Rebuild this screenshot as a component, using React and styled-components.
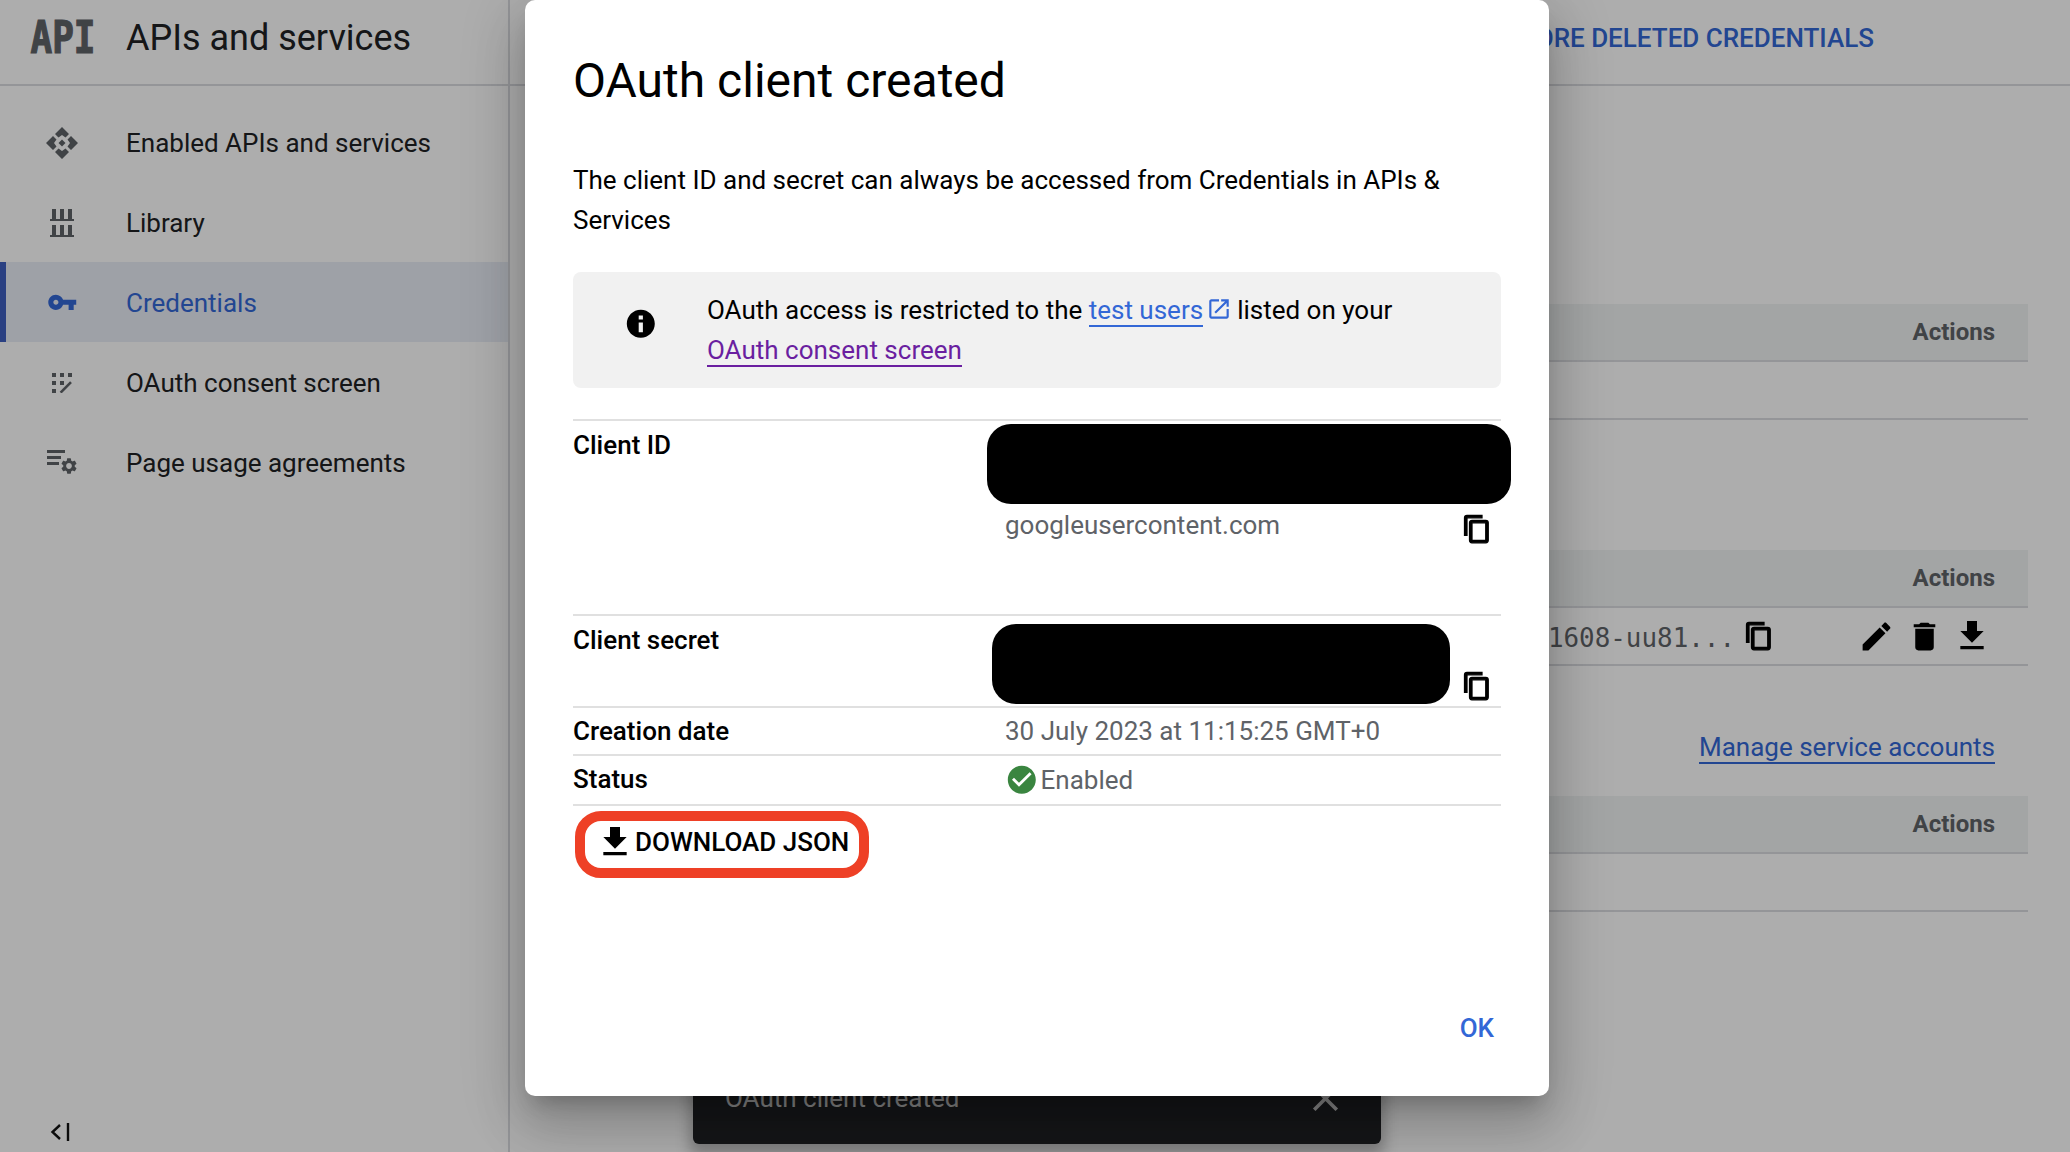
import React from "react";
import styled, { createGlobalStyle } from "styled-components";

const Global = createGlobalStyle`
  html, body { margin: 0; padding: 0; background: #fff; }
  body { font-family: Roboto, "Liberation Sans", sans-serif; color: #202124; }
  * { box-sizing: border-box; }
`;

const P = {
  copy: "M16 1H4c-1.1 0-2 .9-2 2v14h2V3h12V1zm3 4H8c-1.1 0-2 .9-2 2v14c0 1.1.9 2 2 2h11c1.1 0 2-.9 2-2V7c0-1.1-.9-2-2-2zm0 16H8V7h11v14z",
  edit: "M3 17.25V21h3.75L17.81 9.94l-3.75-3.75L3 17.25zM20.71 7.04c.39-.39.39-1.02 0-1.41l-2.34-2.34c-.39-.39-1.02-.39-1.41 0l-1.83 1.83 3.75 3.75 1.83-1.83z",
  del: "M6 19c0 1.1.9 2 2 2h8c1.1 0 2-.9 2-2V7H6v12zM19 4h-3.5l-1-1h-5l-1 1H5v2h14V4z",
  down: "M19 9h-4V3H9v6H5l7 7 7-7zM5 18v2h14v-2H5z",
  key: "M12.65 10C11.83 7.67 9.61 6 7 6c-3.31 0-6 2.69-6 6s2.69 6 6 6c2.61 0 4.83-1.67 5.65-4H17v4h4v-4h2v-4H12.65zM7 14c-1.1 0-2-.9-2-2s.9-2 2-2 2 .9 2 2-.9 2-2 2z",
  info: "M12 2C6.48 2 2 6.48 2 12s4.48 10 10 10 10-4.48 10-10S17.52 2 12 2zm1.5 16h-3v-7h3v7zm0-9h-3V6h3v3z",
  check: "M12 2C6.48 2 2 6.48 2 12s4.48 10 10 10 10-4.48 10-10S17.52 2 12 2zm-2 15l-5-5 1.41-1.41L10 14.17l7.59-7.59L19 8l-9 9z",
  open: "M19 19H5V5h7V3H5c-1.11 0-2 .9-2 2v14c0 1.1.89 2 2 2h14c1.1 0 2-.9 2-2v-7h-2v7zM14 3v2h3.59l-9.83 9.83 1.41 1.41L19 6.41V10h2V3h-7z",
  close: "M19 6.41L17.59 5 12 10.59 6.41 5 5 6.41 10.59 12 5 17.59 6.41 19 12 13.41 17.59 19 19 17.59 13.41 12z",
  gear: "M19.14 12.94c.04-.3.06-.61.06-.94 0-.32-.02-.64-.07-.94l2.03-1.58a.49.49 0 0 0 .12-.61l-1.92-3.32a.488.488 0 0 0-.59-.22l-2.39.96c-.5-.38-1.03-.7-1.62-.94l-.36-2.54a.484.484 0 0 0-.48-.41h-3.84c-.24 0-.43.17-.47.41l-.36 2.54c-.59.24-1.13.57-1.62.94l-2.39-.96c-.22-.08-.47 0-.59.22L2.74 8.87c-.12.21-.08.47.12.61l2.03 1.58c-.05.3-.09.63-.09.94s.02.64.07.94l-2.03 1.58a.49.49 0 0 0-.12.61l1.92 3.32c.12.22.37.29.59.22l2.39-.96c.5.38 1.03.7 1.62.94l.36 2.54c.05.24.24.41.48.41h3.84c.24 0 .44-.17.47-.41l.36-2.54c.59-.24 1.13-.56 1.62-.94l2.39.96c.22.08.47 0 .59-.22l1.92-3.32c.12-.22.07-.47-.12-.61l-2.01-1.58zM12 15.6c-1.98 0-3.6-1.62-3.6-3.6s1.62-3.6 3.6-3.6 3.6 1.62 3.6 3.6-1.62 3.6-3.6 3.6z",
};

const Glyph = ({ d, size = 24, color = "currentColor", weight = 0 }) => (
  <svg width={size} height={size} viewBox="0 0 24 24" fill={color} stroke={weight ? color : "none"} strokeWidth={weight} aria-hidden="true">
    <path d={d} />
  </svg>
);

const ApisIcon = () => (
  <svg width="32" height="32" viewBox="0 0 32 32" fill="#5f6368">
    {[0, 90, 180, 270].map((r) => (
      <polygon key={r} points="16,0 23,7 19.5,10.5 16,8 12.5,10.5 9,7" transform={`rotate(${r} 16 16)`} />
    ))}
    <polygon points="16,12.5 19.5,16 16,19.5 12.5,16" />
  </svg>
);

const LibraryIcon = () => (
  <svg width="24" height="28" viewBox="0 0 24 28" fill="#5f6368">
    {[2, 10, 18].map((x) => (
      <React.Fragment key={x}>
        <rect x={x} y="0" width="4" height="10" />
        <rect x={x} y="16" width="4" height="10" />
      </React.Fragment>
    ))}
    <rect x="0" y="10" width="24" height="2" />
    <rect x="0" y="26" width="24" height="2" />
  </svg>
);

const ConsentIcon = () => (
  <svg width="20" height="20" viewBox="0 0 20 20" fill="#5f6368">
    {[[0, 0], [8, 0], [16, 0], [0, 8], [8, 8], [0, 16]].map(([x, y]) => (
      <rect key={`${x}-${y}`} x={x} y={y} width="4" height="4" />
    ))}
    <path d="M8.6 19.6 19 9.2" stroke="#5f6368" strokeWidth="2.6" fill="none" />
  </svg>
);

const UsageIcon = () => (
  <svg width="30" height="25" viewBox="0 0 30 25" fill="#5f6368">
    <rect x="0" y="0" width="18" height="3" />
    <rect x="0" y="6" width="14" height="3" />
    <rect x="0" y="12" width="12" height="3" />
    <svg x="14" y="7" width="16" height="18" viewBox="2 2 20 20"><path d={P.gear} /></svg>
  </svg>
);

const CollapseIcon = () => (
  <svg width="20" height="18" viewBox="0 0 20 18" fill="none" stroke="#111" strokeWidth="2.4">
    <path d="M10 2 2.5 9 10 16" />
    <path d="M18 0v18" />
  </svg>
);

const Page = styled.div`
  position: relative;
  width: 2070px;
  height: 1152px;
  overflow: hidden;
  display: flex;
  background: #fff;
  font-size: 26px;
  line-height: 40px;
`;

const Sidebar = styled.aside`
  width: 510px;
  flex: none;
  display: flex;
  flex-direction: column;
  border-right: 2px solid #dadce0;
`;

const SideHeader = styled.header`
  height: 86px;
  padding-bottom: 9px;
  display: flex;
  align-items: center;
  gap: 2px;
  border-bottom: 2px solid #dadce0;
  margin-right: -2px;
`;

const IconSlot = styled.span`
  width: 124px;
  flex: none;
  display: flex;
  align-items: center;
  justify-content: center;
`;

const ApiLogo = styled.span`
  display: inline-block;
  font-family: "DejaVu Sans Mono", monospace;
  font-weight: 700;
  font-size: 36px;
  line-height: 36px;
  color: #5f6368;
  -webkit-text-stroke: 1px #5f6368;
  transform: scaleY(1.24);
  margin-left: 2px;
`;

const SideTitle = styled.h1`
  margin: 0;
  font-size: 36px;
  font-weight: 400;
  line-height: 48px;
  color: #202124;
`;

const Nav = styled.nav`
  margin-top: 16px;
`;

const NavItem = styled.a`
  height: 80px;
  padding-top: 1px;
  display: flex;
  align-items: center;
  gap: 2px;
  color: ${(p) => (p.$active ? "#3367d6" : "#202124")};
  background: ${(p) => (p.$active ? "#e9edf7" : "transparent")};
  box-shadow: ${(p) => (p.$active ? "inset 6px 0 0 #3f5fc0" : "none")};
`;

const Collapse = styled.div`
  margin-top: auto;
  padding: 0 0 11px 50px;
  display: flex;
`;

const Main = styled.main`
  flex: 1;
  min-width: 0;
  display: flex;
  flex-direction: column;
  padding: 0 42px;
`;

const TopBar = styled.div`
  height: 86px;
  margin: 0 -42px;
  padding: 0 196px 9px 0;
  display: flex;
  justify-content: flex-end;
  align-items: center;
  border-bottom: 2px solid #dadce0;
  color: #3367d6;
  font-weight: 500;
`;

const Section = styled.section`
  margin-top: ${(p) => p.$top}px;
`;

const TableHead = styled.div`
  height: 58px;
  display: flex;
  justify-content: flex-end;
  align-items: center;
  padding-right: 33px;
  background: #f1f3f4;
  border-bottom: 2px solid #dadce0;
  color: #5f6368;
  font-size: 24px;
  font-weight: 700;
`;

const TableRow = styled.div`
  height: 58px;
  display: flex;
  justify-content: flex-end;
  align-items: center;
  padding-right: 32px;
  border-bottom: 2px solid #dadce0;
`;

const Mono = styled.span`
  font-family: "DejaVu Sans Mono", monospace;
  font-size: 25.9px;
  color: #5f6368;
  white-space: nowrap;
  margin: 3px 9px 0 0;
`;

const CopyButton = styled.span`
  display: flex;
  color: #000;
  margin-right: ${(p) => p.$gap || 0}px;
`;

const ActionIcon = styled.span`
  width: 48px;
  display: flex;
  justify-content: center;
  color: #000;
`;

const LinkRow = styled.div`
  height: 130px;
  padding: 65px 33px 0 0;
  text-align: right;
  line-height: 32px;
`;

const ManageLink = styled.a`
  color: #3367d6;
  border-bottom: 2px solid #3367d6;
`;

const Snackbar = styled.div`
  position: absolute;
  left: 693px;
  top: 1052px;
  width: 688px;
  height: 92px;
  padding: 0 32px;
  display: flex;
  align-items: center;
  justify-content: space-between;
  background: #202124;
  border-radius: 6px;
  color: rgba(255, 255, 255, 0.75);
  box-shadow: 0 8px 14px 4px rgba(0, 0, 0, 0.25);
`;

const SnackClose = styled.span`
  display: flex;
  margin-right: 2px;
`;

const Scrim = styled.div`
  position: absolute;
  inset: 0;
  background: rgba(0, 0, 0, 0.32);
`;

const Dialog = styled.div`
  position: absolute;
  left: 525px;
  top: 0;
  width: 1024px;
  height: 1096px;
  padding: 49px 48px 0;
  display: flex;
  flex-direction: column;
  background: #fff;
  border-radius: 10px;
  box-shadow: 0 15px 20px -9px rgba(0, 0, 0, 0.2), 0 32px 50px 4px rgba(0, 0, 0, 0.14), 0 12px 61px 11px rgba(0, 0, 0, 0.12);
  color: #000;
`;

const DialogTitle = styled.h2`
  margin: 0 0 47px;
  font-size: 48px;
  line-height: 64px;
  font-weight: 400;
`;

const Para = styled.p`
  margin: 0 0 32px;
`;

const Notice = styled.div`
  height: 116px;
  padding: 18px 0;
  display: flex;
  background: #f1f1f1;
  border-radius: 8px;
  margin-bottom: 31px;
`;

const NoticeIcon = styled.span`
  width: 134px;
  flex: none;
  padding: 17px 0 0 2px;
  display: flex;
  justify-content: center;
  align-items: flex-start;
  color: #000;
`;

const NoticeText = styled.div`
  width: 740px;
`;

const TestLink = styled.a`
  color: ${(p) => (p.$visited ? "#6a1fa0" : "#3367d6")};
  border-bottom: 2px solid ${(p) => (p.$visited ? "#6a1fa0" : "#3367d6")};
`;

const ExternalMark = styled.span`
  display: inline-flex;
  vertical-align: -3px;
  margin: 0 5px 0 3px;
  color: #3367d6;
`;

const Row = styled.div`
  display: grid;
  grid-template-columns: 432px 1fr;
  height: ${(p) => p.$h}px;
  border-top: 2px solid #e0e0e0;
  margin-top: ${(p) => p.$mt || 0}px;
  ${(p) => p.$last && "border-bottom: 2px solid #e0e0e0; box-sizing: content-box;"}
`;

const Label = styled.div`
  font-weight: 500;
  padding-top: ${(p) => p.$pt || 0}px;
  line-height: ${(p) => p.$lh || 40}px;
`;

const Value = styled.div`
  color: #5f6368;
  line-height: ${(p) => p.$lh || 40}px;
  display: flex;
  align-items: center;
  gap: 2px;
`;

const IdCell = styled.div`
  display: flex;
  flex-direction: column;
`;

const Redacted = styled.div`
  height: 80px;
  flex: none;
  background: #000;
  border-radius: 24px;
  margin: ${(p) => p.$margin};
  width: ${(p) => p.$w}px;
`;

const IdLine = styled.div`
  display: flex;
  justify-content: space-between;
  align-items: center;
  color: #5f6368;
  height: 42px;
`;

const SecretCell = styled.div`
  display: flex;
  align-items: flex-end;
  height: 88px;
`;

const CellCopy = styled.span`
  display: flex;
  color: #000;
  margin: ${(p) => p.$margin};
`;

const DownloadButton = styled.button`
  align-self: flex-start;
  width: 294px;
  height: 67px;
  margin: 5px 0 0 2px;
  padding: 0 0 6px 10px;
  display: flex;
  align-items: center;
  gap: 0;
  background: #fff;
  border: 10px solid #ee4026;
  border-radius: 26px;
  font: 500 26px/40px Roboto, sans-serif;
  color: #000;
  white-space: nowrap;
`;

const Footer = styled.div`
  margin-top: auto;
  height: 88px;
  padding-right: 7px;
  display: flex;
  justify-content: flex-end;
  align-items: flex-start;
`;

const OkButton = styled.span`
  color: #3367d6;
  font-weight: 500;
`;

const Copy = () => <Glyph d={P.copy} size={30} weight={1} />;

const navItems = [
  { label: "Enabled APIs and services", icon: <ApisIcon /> },
  { label: "Library", icon: <LibraryIcon /> },
  { label: "Credentials", icon: <Glyph d={P.key} size={30.5} color="#3367d6" />, active: true },
  { label: "OAuth consent screen", icon: <ConsentIcon /> },
  { label: "Page usage agreements", icon: <UsageIcon /> },
];

export default function App() {
  return (
    <>
      <Global />
      <Page>
        <Sidebar>
          <SideHeader>
            <IconSlot><ApiLogo>API</ApiLogo></IconSlot>
            <SideTitle>APIs and services</SideTitle>
          </SideHeader>
          <Nav>
            {navItems.map((n) => (
              <NavItem key={n.label} $active={n.active}>
                <IconSlot>{n.icon}</IconSlot>
                {n.label}
              </NavItem>
            ))}
          </Nav>
          <Collapse><CollapseIcon /></Collapse>
        </Sidebar>

        <Main>
          <TopBar>RESTORE DELETED CREDENTIALS</TopBar>
          <Section $top={218}>
            <TableHead>Actions</TableHead>
            <TableRow />
          </Section>
          <Section $top={130}>
            <TableHead>Actions</TableHead>
            <TableRow>
              <Mono>1608-uu81...</Mono>
              <CopyButton $gap={78}><Copy /></CopyButton>
              <ActionIcon><Glyph d={P.edit} size={37} /></ActionIcon>
              <ActionIcon><Glyph d={P.del} size={37} /></ActionIcon>
              <ActionIcon><Glyph d={P.down} size={40} /></ActionIcon>
            </TableRow>
            <LinkRow><ManageLink>Manage service accounts</ManageLink></LinkRow>
          </Section>
          <Section $top={0}>
            <TableHead>Actions</TableHead>
            <TableRow />
          </Section>
        </Main>

        <Snackbar>
          OAuth client created
          <SnackClose><Glyph d={P.close} size={43} /></SnackClose>
        </Snackbar>

        <Scrim />

        <Dialog role="dialog">
          <DialogTitle>OAuth client created</DialogTitle>
          <Para>The client ID and secret can always be accessed from Credentials in APIs &amp; Services</Para>
          <Notice>
            <NoticeIcon><Glyph d={P.info} size={33.6} /></NoticeIcon>
            <NoticeText>
              OAuth access is restricted to the <TestLink>test users</TestLink>
              <ExternalMark><Glyph d={P.open} size={26} /></ExternalMark>
              listed on your <TestLink $visited>OAuth consent screen</TestLink>
            </NoticeText>
          </Notice>

          <Row $h={132}>
            <Label $pt={4}>Client ID</Label>
            <IdCell>
              <Redacted $margin="3px 0 0 -18px" $w={524} />
              <IdLine>
                <span>googleusercontent.com</span>
                <CellCopy $margin="8px 19px 0 0"><Copy /></CellCopy>
              </IdLine>
            </IdCell>
          </Row>
          <Row $h={92} $mt={63}>
            <Label $pt={4}>Client secret</Label>
            <SecretCell>
              <Redacted $margin="0 0 0 -13px" $w={458} />
              <CellCopy $margin="0 0 3px 12px"><Copy /></CellCopy>
            </SecretCell>
          </Row>
          <Row $h={48}>
            <Label $lh={46}>Creation date</Label>
            <Value $lh={46}>30 July 2023 at 11:15:25 GMT+0</Value>
          </Row>
          <Row $h={48} $last>
            <Label $lh={46}>Status</Label>
            <Value $lh={46}>
              <Glyph d={P.check} size={33.6} color="#3a8540" />
              Enabled
            </Value>
          </Row>

          <DownloadButton>
            <Glyph d={P.down} size={40} />
            DOWNLOAD JSON
          </DownloadButton>

          <Footer><OkButton>OK</OkButton></Footer>
        </Dialog>
      </Page>
    </>
  );
}
